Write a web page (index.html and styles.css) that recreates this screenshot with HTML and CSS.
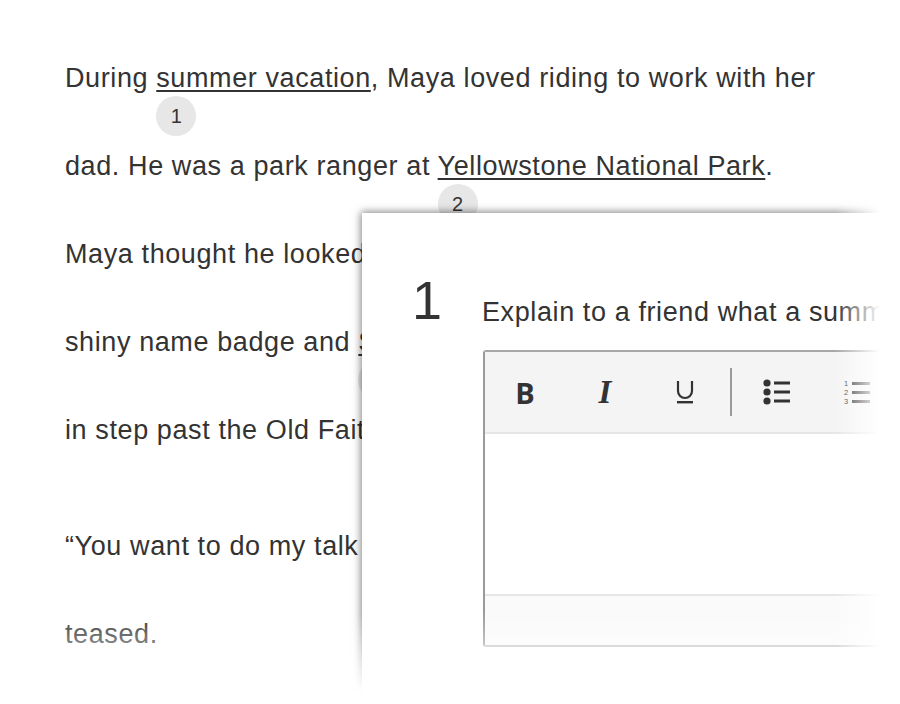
FILE: index.html
```html
<!DOCTYPE html>
<html lang="en">
<head>
    <meta charset="UTF-8">
    <meta name="viewport" content="width=device-width, initial-scale=1.0">
    <title>Summer Vacation</title>
    <link rel="stylesheet" href="styles.css">
</head>
<body>
    <!-- Texto da leitura -->
    <div class="story">
        <p>
            During <span class="note">summer vacation<span class="badge">1</span></span>, Maya loved riding to work with her<br>
            dad. He was a park ranger at <span class="note">Yellowstone National Park<span class="badge">2</span></span>.<br>
            Maya thought he looked so important in his uniform, with his<br>
            shiny name badge and <span class="note">Smokey Bear hat<span class="badge">3</span></span>. She loved to walk<br>
            in step past the Old Faithful geyser with him.
        </p>
        <p>
            &ldquo;You want to do my talk for the tourists today?&rdquo; her dad<br>
            teased.
        </p>
    </div>

    <!-- Painel da pergunta -->
    <div class="question-panel">
        <div class="question">
            <div class="q-number">1</div>
            <div class="q-body">
                <div class="q-text">Explain to a friend what a summer vacation is.</div>
                <div class="editor">
                    <div class="toolbar">
                        <button class="tool tool-bold">B</button>
                        <button class="tool tool-italic">I</button>
                        <button class="tool">
                            <svg width="18" height="24" viewBox="0 0 18 24">
                                <path d="M2 1 V11 A7 7 0 0 0 16 11 V1" fill="none" stroke="#333" stroke-width="2.2"/>
                                <rect x="1" y="21" width="16" height="2.4" fill="#333"/>
                            </svg>
                        </button>
                        <span class="divider"></span>
                        <button class="tool">
                            <svg width="28" height="26" viewBox="0 0 28 26">
                                <circle cx="4" cy="4" r="3.6" fill="#333"/>
                                <circle cx="4" cy="13" r="3.6" fill="#333"/>
                                <circle cx="4" cy="22" r="3.6" fill="#333"/>
                                <rect x="11" y="2.5" width="16" height="3" fill="#333"/>
                                <rect x="11" y="11.5" width="16" height="3" fill="#333"/>
                                <rect x="11" y="20.5" width="16" height="3" fill="#333"/>
                            </svg>
                        </button>
                        <button class="tool">
                            <svg width="28" height="26" viewBox="0 0 28 26">
                                <text x="1" y="7" font-size="7.5" font-family="Liberation Sans, sans-serif" fill="#333">1</text>
                                <text x="1" y="16" font-size="7.5" font-family="Liberation Sans, sans-serif" fill="#333">2</text>
                                <text x="1" y="25" font-size="7.5" font-family="Liberation Sans, sans-serif" fill="#333">3</text>
                                <rect x="9" y="3" width="18" height="3" fill="#333"/>
                                <rect x="9" y="12" width="18" height="3" fill="#333"/>
                                <rect x="9" y="21" width="18" height="3" fill="#333"/>
                            </svg>
                        </button>
                    </div>
                    <div class="editor-content"></div>
                    <div class="editor-footer"></div>
                </div>
            </div>
        </div>
    </div>

    <!-- Esmaecimento nas bordas -->
    <div class="fade-right"></div>
    <div class="fade-bottom"></div>
</body>
</html>
```

FILE: styles.css
```css
body {
    font-family: "Liberation Sans", Arial, sans-serif;
    background-color: #fff;
    color: #333;
    margin: 0;
    padding: 0;
    overflow: hidden;
    height: 704px;
    position: relative;
}
.story {
    padding: 34px 0 0 65px;
    font-size: 27px;
    letter-spacing: 0.6px;
    line-height: 88px;
    white-space: nowrap;
}
.story p {
    margin: 0 0 28px 0;
}
.note {
    position: relative;
    text-decoration: underline;
    text-underline-offset: 3px;
    text-decoration-thickness: 2px;
}
.badge {
    position: absolute;
    left: 0;
    top: calc(100% + 3px);
    width: 40px;
    height: 40px;
    border-radius: 50%;
    background-color: #e7e7e7;
    color: #333;
    font-size: 20px;
    letter-spacing: 0;
    line-height: 40px;
    text-align: center;
    display: inline-block;
}

/* Painel sobreposto */
.question-panel {
    position: absolute;
    left: 362px;
    top: 213px;
    width: 620px;
    height: 560px;
    background-color: #fff;
    box-shadow: 0 0 8px 1px rgba(0, 0, 0, 0.5);
    padding: 62px 0 0 50px;
    box-sizing: border-box;
}
.question {
    display: flex;
}
.q-number {
    width: 70px;
    font-size: 54px;
    line-height: 50px;
    flex-shrink: 0;
}
.q-text {
    font-size: 27px;
    letter-spacing: 0.6px;
    line-height: 30px;
    margin-top: 22px;
    white-space: nowrap;
}
.editor {
    margin-top: 23px;
    margin-left: 1px;
    width: 460px;
    border-left: 2px solid #9a9a9a;
    border-top: 2px solid #a8a8a8;
    border-bottom: 2px solid #c0c0c0;
    border-radius: 3px 0 0 3px;
}
.toolbar {
    display: flex;
    align-items: center;
    height: 80px;
    background-color: #f4f4f4;
    border-bottom: 2px solid #e6e6e6;
}
.tool {
    width: 80px;
    height: 80px;
    border: none;
    background: none;
    padding: 0;
    color: #333;
    display: flex;
    align-items: center;
    justify-content: center;
    cursor: pointer;
}
.tool-bold {
    font-family: "Open Sans", "Liberation Sans", Arial, sans-serif;
    font-weight: bold;
    font-size: 29px;
}
.tool-italic {
    font-family: "Liberation Serif", "Times New Roman", serif;
    font-style: italic;
    font-weight: bold;
    font-size: 33px;
}
.divider {
    width: 2px;
    height: 48px;
    background-color: #9a9a9a;
    margin: 0 5px;
}
.editor-content {
    height: 160px;
    background-color: #fff;
}
.editor-footer {
    height: 49px;
    background-color: #fafafa;
    border-top: 2px solid #e6e6e6;
}

/* Esmaecimento */
.fade-right {
    position: absolute;
    top: 0;
    left: 835px;
    width: 65px;
    height: 704px;
    background: linear-gradient(to right, rgba(255, 255, 255, 0) 0, #fff 45px);
}
.fade-bottom {
    position: absolute;
    left: 0;
    top: 612px;
    width: 900px;
    height: 92px;
    background: linear-gradient(to bottom, rgba(255, 255, 255, 0) 0, #fff 80px);
}
```
